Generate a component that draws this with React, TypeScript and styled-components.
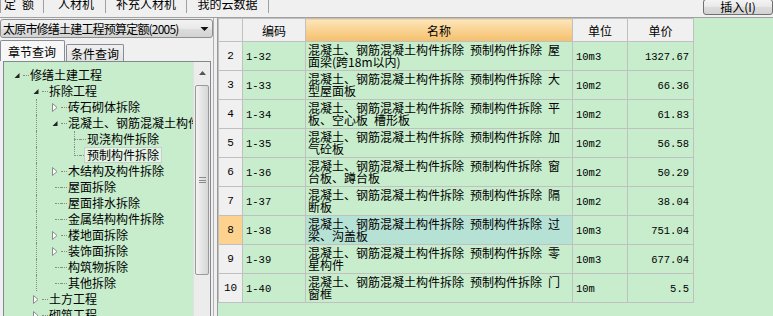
import React from 'react';
import styled, { createGlobalStyle } from 'styled-components';

const GlobalStyle = createGlobalStyle`
  html, body { margin: 0; padding: 0; background: #f0f0f0; }
  body {
    font-family: "Noto Sans CJK SC", "Noto Sans", sans-serif;
    font-size: 12px;
    color: #000;
    overflow: hidden;
  }
  * { box-sizing: border-box; }
`;

const GREEN = '#c7edcc';
const LINE = '#c0c0c0';
const MONO = '"Liberation Mono", "DejaVu Sans Mono", monospace';

const Page = styled.div`
  width: 773px;
  height: 316px;
  display: flex;
  flex-direction: column;
  overflow: hidden;
  background: #f0f0f0;
`;

/* ---------- top bar ---------- */
const TopBar = styled.div`
  height: 18px;
  flex: none;
  display: flex;
  justify-content: space-between;
  align-items: flex-start;
  border-bottom: 1px solid #a0a0a0;
`;

const MainTabs = styled.div`
  display: flex;
  margin-top: -7px;
  height: 20px;
`;

const MainTab = styled.div<{ $w: number; $gap?: number; $sel?: boolean }>`
  width: ${(p) => p.$w}px;
  margin-left: ${(p) => p.$gap ?? 0}px;
  height: 20px;
  display: flex;
  align-items: center;
  justify-content: center;
  border-right: 1px solid #a0a0a0;
  border-left: ${(p) => (p.$sel ? '1px solid #a0a0a0' : 'none')};
  font-size: 12px;
  letter-spacing: ${(p) => (p.$sel ? '6px' : '0')};
  white-space: nowrap;
`;

const InsertButton = styled.div`
  width: 70px;
  height: 16px;
  margin-top: -1px;
  display: flex;
  align-items: center;
  justify-content: center;
  border: 1px solid #707070;
  border-radius: 3px;
  background: linear-gradient(#f4f4f4, #e8e8e8 50%, #dcdcdc 51%, #d2d2d2);
  font-size: 12px;
  line-height: 14px;
`;

/* ---------- body ---------- */
const Body = styled.div`
  flex: 1;
  display: flex;
  min-height: 0;
`;

const LeftPane = styled.div`
  width: 213px;
  flex: none;
  display: flex;
  flex-direction: column;
`;

const Select = styled.div`
  margin-top: 1px;
  height: 19px;
  display: flex;
  align-items: center;
  justify-content: space-between;
  padding: 0 3px 0 2px;
  border: 1px solid #8e8f8f;
  border-radius: 3px;
  background: linear-gradient(#f3f3f3, #e9e9e9 50%, #dddddd 51%, #d3d3d3);
  font-size: 12px;
  letter-spacing: -0.8px;
  white-space: nowrap;
`;

const QueryTabs = styled.div`
  display: flex;
  align-items: flex-end;
  height: 23px;
  margin-top: 0;
`;

const QueryTab = styled.div<{ $sel?: boolean }>`
  height: ${(p) => (p.$sel ? 21 : 17)}px;
  padding: 0 ${(p) => (p.$sel ? 8 : 4)}px 0 ${(p) => (p.$sel ? 7 : 4)}px;
  display: flex;
  align-items: center;
  border: 1px solid #898c95;
  border-bottom: none;
  border-radius: 2px 2px 0 0;
  background: ${(p) => (p.$sel ? '#f7f7f7' : 'linear-gradient(#f0f0f0, #e2e2e2)')};
  font-size: 12px;
  margin-left: ${(p) => (p.$sel ? 0 : 1)}px;
`;

const TreeBox = styled.div`
  flex: 1;
  margin: 0 2px 0 3px;
  border: 1px solid #828790;
  border-bottom: none;
  background: ${GREEN};
  display: flex;
  min-height: 0;
  overflow: hidden;
`;

const TreeList = styled.div`
  flex: 1;
  padding-top: 5px;
  overflow: hidden;
`;

const TreeRow = styled.div`
  height: 16px;
  display: flex;
  align-items: center;
  padding-left: 7px;
  white-space: nowrap;
`;

const Indent = styled.div<{ $guide?: boolean }>`
  width: 19px;
  height: 16px;
  flex: none;
  position: relative;
  &::before {
    content: '';
    display: ${(p) => (p.$guide ? 'block' : 'none')};
    position: absolute;
    left: 6px;
    top: 0;
    bottom: 0;
    border-left: 1px dotted #8a8a8a;
  }
`;

const IconCell = styled.div<{ $leaf?: boolean; $vline?: 'full' | 'half' }>`
  width: 12px;
  height: 16px;
  flex: none;
  position: relative;
  display: flex;
  align-items: center;
  justify-content: center;
  &::before {
    content: '';
    display: ${(p) => (p.$leaf ? 'block' : 'none')};
    position: absolute;
    left: 6px;
    right: 0;
    top: 8px;
    border-top: 1px dotted #8a8a8a;
  }
  &::after {
    content: '';
    display: ${(p) => (p.$vline ? 'block' : 'none')};
    position: absolute;
    left: 6px;
    top: 0;
    height: ${(p) => (p.$vline === 'half' ? '9px' : '16px')};
    border-left: 1px dotted #8a8a8a;
  }
`;

const DotCell = styled.div`
  width: 6px;
  height: 1px;
  flex: none;
  border-top: 1px dotted #8a8a8a;
  margin-right: 1px;
`;

const Label = styled.span<{ $sel?: boolean }>`
  font-size: 12px;
  line-height: 14px;
  padding: 0 2px;
  margin-left: -3px;
  border: 1px solid ${(p) => (p.$sel ? '#c9cfc9' : 'transparent')};
  background: ${(p) => (p.$sel ? '#e4f3e6' : 'transparent')};
`;

const ScrollBar = styled.div`
  width: 17px;
  flex: none;
  display: flex;
  flex-direction: column;
  background: #ececec;
  border-left: 1px solid #e0e0e0;
`;

const ScrollArrow = styled.div`
  height: 21px;
  display: flex;
  align-items: center;
  justify-content: center;
`;

const ScrollThumb = styled.div`
  height: 190px;
  margin: 2px 1px 0 1px;
  border: 1px solid #9a9a9a;
  border-radius: 2px;
  background: linear-gradient(90deg, #f4f4f4, #e4e4e4 50%, #d6d6d6);
  display: flex;
  align-items: center;
  justify-content: center;
`;

const Grip = styled.div`
  width: 7px;
  height: 6px;
  border-top: 1px solid #8a8a8a;
  border-bottom: 1px solid #8a8a8a;
  position: relative;
  &::after {
    content: '';
    position: absolute;
    left: 0;
    right: 0;
    top: 2px;
    border-top: 1px solid #8a8a8a;
  }
`;

const Splitter = styled.div`
  width: 5px;
  flex: none;
  background: #f0f0f0;
  border-left: 1px solid #b0b0b0;
  border-right: 1px solid #9a9a9a;
`;

const RightPane = styled.div`
  flex: 1;
  background: ${GREEN};
  overflow: hidden;
`;

const Grid = styled.table`
  border-collapse: collapse;
  table-layout: fixed;
  width: 475px;
`;

const HeadCell = styled.th<{ $accent?: boolean }>`
  height: 23px;
  padding: 0;
  border: 1px solid ${LINE};
  background: ${(p) => (p.$accent ? 'linear-gradient(#fde6bb, #f9d291 50%, #f4c06c)' : '#f0f0f0')};
  font-weight: normal;
  font-size: 12px;
  text-align: center;
`;

const NoCell = styled.td<{ $active?: boolean }>`
  height: 29px;
  padding: 0;
  border: 1px solid ${LINE};
  background: ${(p) => (p.$active ? '#fdd28e' : '#f0f0f0')};
  text-align: center;
  font-family: ${MONO};
  font-size: 11px;
`;

const CodeCell = styled.td<{ $right?: boolean }>`
  padding: 2px ${(p) => (p.$right ? 4 : 0)}px 0 ${(p) => (p.$right ? 0 : 3)}px;
  border: 1px solid ${LINE};
  text-align: ${(p) => (p.$right ? 'right' : 'left')};
  font-family: ${MONO};
  font-size: 10.5px;
  white-space: nowrap;
`;

const NameCell = styled.td<{ $active?: boolean }>`
  padding: 2px 0 0 2px;
  border: 1px solid ${LINE};
  vertical-align: top;
  background: ${(p) => (p.$active ? '#b6e2d6' : 'transparent')};
  font-size: 12px;
  line-height: 11.5px;
  white-space: nowrap;
  overflow: hidden;
`;

const NameLine = styled.div`
  height: 11.5px;
`;

/* ---------- icons ---------- */
const OpenIcon = () => (
  <svg width="12" height="16" viewBox="0 0 12 16">
    <polygon points="8.5,6 8.5,11 3.5,11" fill="#222" />
  </svg>
);

const ClosedIcon = () => (
  <svg width="12" height="16" viewBox="0 0 12 16">
    <polygon points="3.5,4.5 8,8.5 3.5,12.5" fill="#fff" stroke="#8a8a8a" strokeWidth="1" />
  </svg>
);

const UpArrow = () => (
  <svg width="9" height="6" viewBox="0 0 9 6">
    <polygon points="4.5,1 8,5 1,5" fill="#555" />
  </svg>
);

const DownArrow = () => (
  <svg width="9" height="6" viewBox="0 0 9 6">
    <polygon points="0.5,1 8.5,1 4.5,5" fill="#111" />
  </svg>
);

/* ---------- data ---------- */
type Kind = 'open' | 'closed' | 'leaf';
interface TreeNode {
  level: number;
  kind: Kind;
  label: string;
  guides?: number[];
  vline?: 'full' | 'half';
  selected?: boolean;
}

const tree: TreeNode[] = [
  { level: 0, kind: 'open', label: '修缮土建工程' },
  { level: 1, kind: 'open', label: '拆除工程' },
  { level: 2, kind: 'closed', label: '砖石砌体拆除', guides: [1] },
  { level: 2, kind: 'open', label: '混凝土、钢筋混凝土构件拆除', guides: [1] },
  { level: 3, kind: 'leaf', label: '现浇构件拆除', guides: [1], vline: 'full' },
  { level: 3, kind: 'leaf', label: '预制构件拆除', guides: [1], vline: 'half', selected: true },
  { level: 2, kind: 'closed', label: '木结构及构件拆除', guides: [1] },
  { level: 2, kind: 'leaf', label: '屋面拆除', guides: [1] },
  { level: 2, kind: 'leaf', label: '屋面排水拆除', guides: [1] },
  { level: 2, kind: 'leaf', label: '金属结构构件拆除', guides: [1] },
  { level: 2, kind: 'closed', label: '楼地面拆除', guides: [1] },
  { level: 2, kind: 'closed', label: '装饰面拆除', guides: [1] },
  { level: 2, kind: 'leaf', label: '构筑物拆除', guides: [1] },
  { level: 2, kind: 'leaf', label: '其他拆除', guides: [1] },
  { level: 1, kind: 'closed', label: '土方工程' },
  { level: 1, kind: 'closed', label: '砌筑工程' },
];

const PREFIX = '混凝土、钢筋混凝土构件拆除\u2002预制构件拆除\u2002';

interface Row {
  no: number;
  code: string;
  tail: string;
  second: string;
  unit: string;
  price: string;
  active?: boolean;
}

const rows: Row[] = [
  { no: 2, code: '1-32', tail: '屋', second: '面梁(跨18m以内)', unit: '10m3', price: '1327.67' },
  { no: 3, code: '1-33', tail: '大', second: '型屋面板', unit: '10m2', price: '66.36' },
  { no: 4, code: '1-34', tail: '平', second: '板、空心板\u2002槽形板', unit: '10m2', price: '61.83' },
  { no: 5, code: '1-35', tail: '加', second: '气砼板', unit: '10m2', price: '56.58' },
  { no: 6, code: '1-36', tail: '窗', second: '台板、蹲台板', unit: '10m2', price: '50.29' },
  { no: 7, code: '1-37', tail: '隔', second: '断板', unit: '10m2', price: '38.04' },
  { no: 8, code: '1-38', tail: '过', second: '梁、沟盖板', unit: '10m3', price: '751.04', active: true },
  { no: 9, code: '1-39', tail: '零', second: '星构件', unit: '10m3', price: '677.04' },
  { no: 10, code: '1-40', tail: '门', second: '窗框', unit: '10m', price: '5.5' },
];

const TreeItem = ({ node }: { node: TreeNode }) => {
  const indents = [];
  for (let k = 0; k < node.level; k++) {
    indents.push(<Indent key={k} $guide={node.guides?.includes(k)} />);
  }
  return (
    <TreeRow>
      {indents}
      <IconCell $leaf={node.kind === 'leaf'} $vline={node.vline}>
        {node.kind === 'open' && <OpenIcon />}
        {node.kind === 'closed' && <ClosedIcon />}
      </IconCell>
      <DotCell />
      <Label $sel={node.selected}>{node.label}</Label>
    </TreeRow>
  );
};

export default function App() {
  return (
    <Page>
      <GlobalStyle />
      <TopBar>
        <MainTabs>
          <MainTab $w={44} $sel>定额</MainTab>
          <MainTab $w={59} $gap={3}>人材机</MainTab>
          <MainTab $w={81}>补充人材机</MainTab>
          <MainTab $w={82}>我的云数据</MainTab>
        </MainTabs>
        <InsertButton>插入(I)</InsertButton>
      </TopBar>
      <Body>
        <LeftPane>
          <Select>
            <span>太原市修缮土建工程预算定额(2005)</span>
            <DownArrow />
          </Select>
          <QueryTabs>
            <QueryTab $sel>章节查询</QueryTab>
            <QueryTab>条件查询</QueryTab>
          </QueryTabs>
          <TreeBox>
            <TreeList>
              {tree.map((n, i) => (
                <TreeItem key={i} node={n} />
              ))}
            </TreeList>
            <ScrollBar>
              <ScrollArrow>
                <UpArrow />
              </ScrollArrow>
              <ScrollThumb>
                <Grip />
              </ScrollThumb>
            </ScrollBar>
          </TreeBox>
        </LeftPane>
        <Splitter />
        <RightPane>
          <Grid>
            <colgroup>
              <col style={{ width: 24 }} />
              <col style={{ width: 63 }} />
              <col style={{ width: 267 }} />
              <col style={{ width: 55 }} />
              <col style={{ width: 66 }} />
            </colgroup>
            <thead>
              <tr>
                <HeadCell />
                <HeadCell>编码</HeadCell>
                <HeadCell $accent>名称</HeadCell>
                <HeadCell>单位</HeadCell>
                <HeadCell>单价</HeadCell>
              </tr>
            </thead>
            <tbody>
              {rows.map((r) => (
                <tr key={r.no}>
                  <NoCell $active={r.active}>{r.no}</NoCell>
                  <CodeCell>{r.code}</CodeCell>
                  <NameCell $active={r.active}>
                    <NameLine>
                      {PREFIX}
                      {r.tail}
                    </NameLine>
                    <NameLine>{r.second}</NameLine>
                  </NameCell>
                  <CodeCell>{r.unit}</CodeCell>
                  <CodeCell $right>{r.price}</CodeCell>
                </tr>
              ))}
            </tbody>
          </Grid>
        </RightPane>
      </Body>
    </Page>
  );
}
